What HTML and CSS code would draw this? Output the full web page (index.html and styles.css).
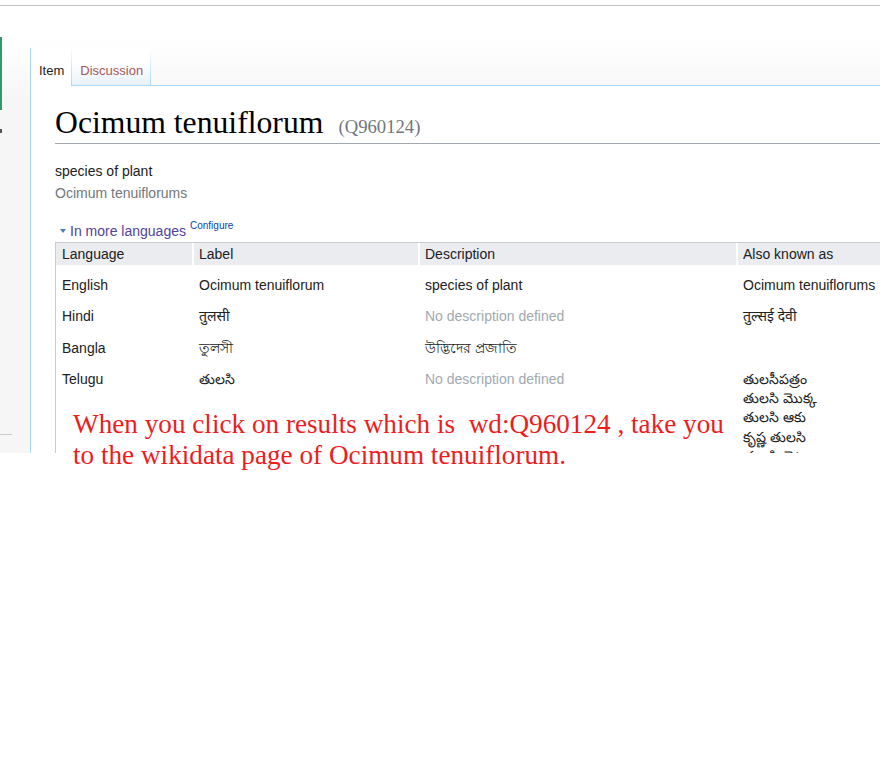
FILE: index.html
```html
<!DOCTYPE html>
<html lang="en">
<head>
<meta charset="utf-8">
<title>Ocimum tenuiflorum - Wikidata</title>
<link rel="stylesheet" href="styles.css">
</head>
<body>
<div class="page">
  <div class="topline"></div>
  <div class="shot">
    <aside class="side">
      <span class="logo-bar"></span>
      <span class="logo-glyph"></span>
      <span class="side-rule"></span>
    </aside>
    <div class="main">
      <nav class="head">
        <span class="tab tab-active">Item</span>
        <span class="tab-sep"></span>
        <span class="tab tab-new">Discussion</span>
        <span class="tab-sep"></span>
        <span class="head-fill"></span>
      </nav>
      <div class="content">
        <h1 class="title">Ocimum tenuiflorum<span class="qid">(Q960124)</span></h1>
        <div class="desc">species of plant</div>
        <div class="aliases">Ocimum tenuiflorums</div>
        <div class="toggler"><span class="arrow"></span><span class="toggle-text">In more languages</span><sup class="configure">Configure</sup></div>
        <div class="terms">
          <div class="th">Language</div>
          <div class="th sep">Label</div>
          <div class="th sep">Description</div>
          <div class="th sep">Also known as</div>

          <div class="td first">English</div>
          <div class="td first sep">Ocimum tenuiflorum</div>
          <div class="td first sep">species of plant</div>
          <div class="td first sep">Ocimum tenuiflorums</div>

          <div class="td">Hindi</div>
          <div class="td sep">तुलसी</div>
          <div class="td sep empty">No description defined</div>
          <div class="td sep">तुल्सई देवी</div>

          <div class="td">Bangla</div>
          <div class="td sep">তুলসী</div>
          <div class="td sep">উদ্ভিদের প্রজাতি</div>
          <div class="td sep"></div>

          <div class="td">Telugu</div>
          <div class="td sep">తులసి</div>
          <div class="td sep empty">No description defined</div>
          <div class="td sep">
            <div>తులసీపత్రం</div>
            <div>తులసి మొక్క</div>
            <div>తులసి ఆకు</div>
            <div>కృష్ణ తులసి</div>
            <div>తులసి చెట్టు</div>
          </div>
        </div>
      </div>
    </div>
  </div>
  <p class="note">When you click on results which is &nbsp;wd:Q960124 , take you<br>to the wikidata page of Ocimum tenuiflorum.</p>
</div>
</body>
</html>
```
FILE: styles.css
```css
html, body {
  margin: 0;
  padding: 0;
  background: #ffffff;
}

.page {
  position: relative;
  width: 880px;
  height: 772px;
  overflow: hidden;
  font-family: "Liberation Sans", Arial, "Noto Sans", sans-serif;
  color: #202122;
}

.topline {
  margin-top: 5px;
  height: 1px;
  background: #c0c0c0;
}

.shot {
  display: flex;
  height: 447px;
  overflow: hidden;
  background: linear-gradient(to bottom, #ffffff 0, #ffffff 32px, #f6f6f6 96px, #f6f6f6 100%);
}

.side {
  width: 30px;
  flex: none;
  display: flex;
  flex-direction: column;
  align-items: flex-start;
}

.logo-bar {
  margin-top: 31px;
  width: 2px;
  height: 73px;
  background: #339966;
}

.logo-glyph {
  margin-top: 19px;
  width: 2px;
  height: 4px;
  background: #555555;
}

.side-rule {
  margin-top: auto;
  margin-bottom: 18px;
  width: 12px;
  height: 1px;
  background: #c8ccd1;
}

.main {
  flex: 1;
  min-width: 0;
  margin-top: 42px;
  border-left: 1px solid #a7d7f9;
  display: flex;
  flex-direction: column;
}

.head {
  display: flex;
  height: 38px;
  flex: none;
  font-size: 13px;
}

.tab {
  padding: 16px 7px 0 8px;
  line-height: 14px;
  box-sizing: border-box;
}

.tab-active {
  background: #ffffff;
  color: #222222;
  height: 38px;
}

.tab-new {
  color: #a55858;
  height: 38px;
  border-bottom: 1px solid #a7d7f9;
  background: linear-gradient(to bottom, #ffffff 0, #ffffff 40%, #e8f2f8 100%);
}

.tab-sep {
  width: 1px;
  height: 38px;
  background: linear-gradient(to bottom, rgba(167, 215, 249, 0) 0, #a7d7f9 100%);
}

.head-fill {
  flex: 1;
  height: 38px;
  box-sizing: border-box;
  border-bottom: 1px solid #a7d7f9;
}

.content {
  flex: 1;
  background: #ffffff;
  padding-left: 24px;
  font-size: 14px;
}

.title {
  margin: 17px 0 0;
  height: 40px;
  font-family: "Liberation Serif", "Times New Roman", serif;
  font-weight: normal;
  font-size: 31.7px;
  line-height: 40px;
  color: #000000;
  border-bottom: 1px solid #a2a9b1;
  white-space: nowrap;
}

.qid {
  margin-left: 15px;
  font-size: 18.7px;
  line-height: 1;
  color: #72777d;
}

.desc {
  margin-top: 16px;
  line-height: 22px;
}

.aliases {
  line-height: 22px;
  color: #72777d;
}

.toggler {
  margin-top: 16px;
  line-height: 22px;
  display: flex;
  align-items: center;
  white-space: nowrap;
}

.arrow {
  width: 0;
  height: 0;
  margin: 0 4px 0 5px;
  border-left: 3.5px solid transparent;
  border-right: 3.5px solid transparent;
  border-top: 4px solid #4a7fc0;
}

.toggle-text {
  color: #52429e;
}

.configure {
  align-self: flex-start;
  margin-left: 4px;
  font-size: 10px;
  line-height: 12px;
  color: #0645ad;
}

.terms {
  display: grid;
  grid-template-columns: 136px 226px 318px 220px;
  border-top: 1px solid #c8ccd1;
  border-left: 1px solid #c8ccd1;
  width: max-content;
}

.th {
  background: #eaecf0;
  height: 22px;
  line-height: 22px;
  padding-left: 6px;
  white-space: nowrap;
}

.td {
  padding: 6px 0 6px 6px;
  line-height: 19.3px;
  white-space: nowrap;
}

.sep {
  border-left: 2px solid #ffffff;
  padding-left: 5px;
}

.td.sep {
  border-left-color: transparent;
}

.td.first {
  padding-top: 11px;
}

.empty {
  color: #a2a9b1;
}

.note {
  position: absolute;
  left: 73px;
  top: 409px;
  margin: 0;
  font-family: "Liberation Serif", "Times New Roman", serif;
  font-size: 27.2px;
  line-height: 31px;
  color: #ee1c1c;
  white-space: nowrap;
}
```
